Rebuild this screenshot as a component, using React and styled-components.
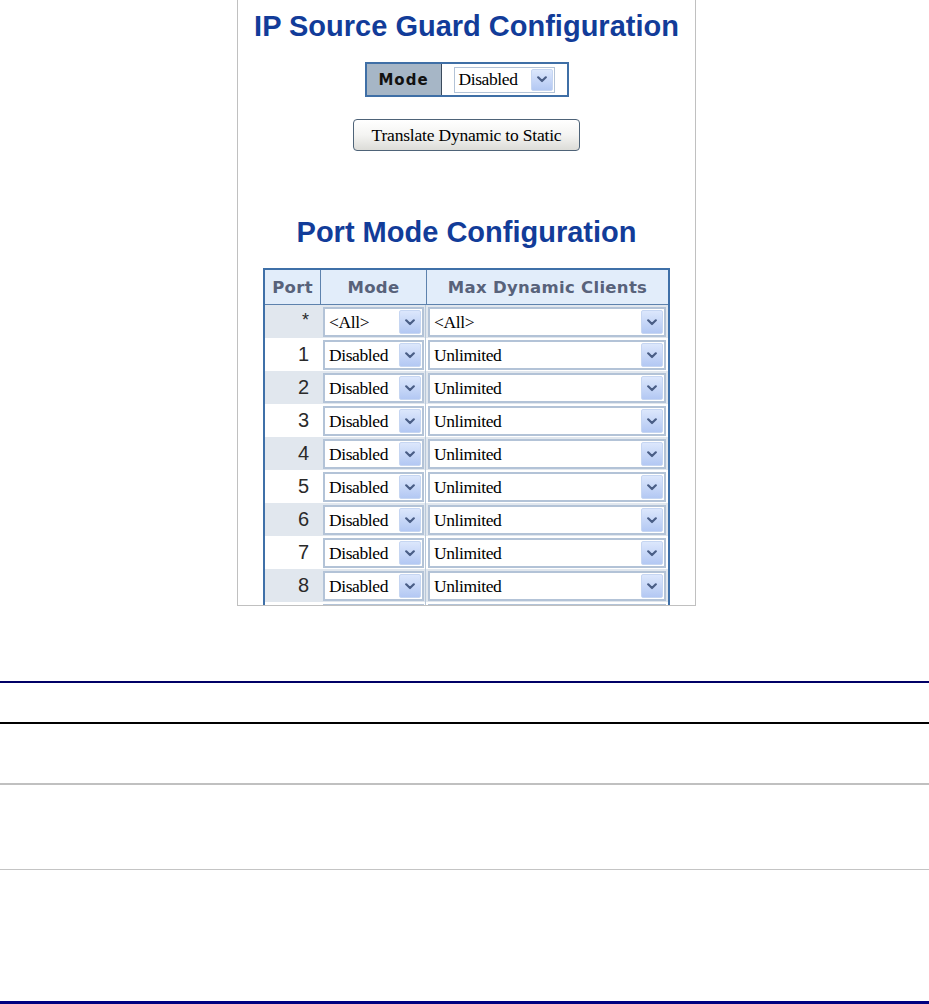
import React from "react"
import styled, { createGlobalStyle } from "styled-components"

const GlobalStyle = createGlobalStyle`
  html, body {
    margin: 0;
    padding: 0;
    background: #fff;
  }
  body {
    font-family: "Liberation Sans", Arial, sans-serif;
  }
`

const Page = styled.div`
  width: 929px;
  height: 1004px;
  overflow: hidden;
  display: flex;
  flex-direction: column;
`

const Shot = styled.div`
  flex-shrink: 0;
  margin-left: 237px;
  width: 459px;
  height: 606px;
  box-sizing: border-box;
  border: 1px solid #c0c0c0;
  border-top: none;
  overflow: hidden;
  display: flex;
  flex-direction: column;
  align-items: center;
  padding-top: 12px;

  & > * {
    flex-shrink: 0;
  }
`

const Title = styled.h1`
  margin: ${(p) => p.$top}px 0 0;
  font-family: "Liberation Sans", Arial, sans-serif;
  font-size: 29px;
  line-height: 29px;
  font-weight: bold;
  color: #123c99;
  white-space: nowrap;
`

const ModeBox = styled.div`
  margin-top: 21px;
  width: 204px;
  height: 35px;
  box-sizing: border-box;
  border: 2px solid #3f6fa6;
  display: flex;
`

const ModeLabel = styled.div`
  width: 74px;
  border-right: 1px solid #3a4a5c;
  background: #a6b6c6;
  display: flex;
  align-items: center;
  justify-content: center;
  font-family: "DejaVu Sans", Verdana, sans-serif;
  font-weight: bold;
  font-size: 15px;
  letter-spacing: 1px;
  color: #111;
`

const ModeValue = styled.div`
  flex: 1;
  background: #fff;
  display: flex;
  align-items: center;
  padding: 0 12px;
`

const Button = styled.div`
  margin-top: 22px;
  width: 227px;
  height: 32px;
  box-sizing: border-box;
  border: 1px solid #4e6378;
  border-radius: 4px;
  background: linear-gradient(#ffffff, #f4f4f2 50%, #dcdcd8);
  display: flex;
  align-items: center;
  justify-content: center;
  font-family: "Liberation Serif", "Times New Roman", serif;
  font-size: 17.5px;
  letter-spacing: -0.2px;
  color: #000;
  white-space: nowrap;
`

const Table = styled.div`
  margin-top: 21px;
  width: 407px;
  box-sizing: border-box;
  border: 2px solid #3f70a8;
  border-bottom: none;
`

const HeadRow = styled.div`
  display: grid;
  grid-template-columns: 56px 106px 1fr;
  height: 35px;
  box-sizing: border-box;
  border-bottom: 1px solid #5d82ad;
  background: #e2edfa;
`

const HeadCell = styled.div`
  display: flex;
  align-items: center;
  justify-content: center;
  border-right: ${(p) => (p.$last ? "none" : "1px solid #5d82ad")};
  font-family: "DejaVu Sans", Verdana, sans-serif;
  font-weight: bold;
  font-size: 16.5px;
  letter-spacing: 0.3px;
  color: #58627a;
  white-space: nowrap;
`

const Row = styled.div`
  display: grid;
  grid-template-columns: 56px 105px 1fr;
  height: 33px;
  background: ${(p) => (p.$alt ? "#e1e7ee" : "#fff")};
`

const PortCell = styled.div`
  display: flex;
  align-items: center;
  justify-content: flex-end;
  padding-right: 12px;
  font-family: "Liberation Sans", Arial, sans-serif;
  font-size: 20px;
  color: #2a2a2a;
`

const Star = styled.span`
  align-self: flex-start;
  margin-top: 5px;
  font-size: 18px;
`

const SelectCell = styled.div`
  display: flex;
  padding: 2px ${(p) => p.$r}px 1px ${(p) => p.$l}px;
  border-right: ${(p) => (p.$divider ? "1px solid #b8c8da" : "none")};
`

const SelectBox = styled.div`
  flex: 1;
  display: flex;
  align-items: stretch;
  box-sizing: border-box;
  height: ${(p) => p.$h}px;
  border: ${(p) => p.$b}px solid #b3c3d7;
  background: #fff;
  font-family: "Liberation Serif", "Times New Roman", serif;
  font-size: 17.5px;
  letter-spacing: -0.4px;
  color: #000;
`

const SelectText = styled.span`
  flex: 1;
  display: flex;
  align-items: center;
  padding-left: 4px;
  white-space: nowrap;
  overflow: hidden;
`

const Arrow = styled.span`
  width: 22px;
  margin: 1px;
  box-sizing: border-box;
  border-radius: 2px;
  border: 1px solid #c6d6f2;
  background: linear-gradient(#dce7fc, #b3c8f3);
  display: flex;
  align-items: center;
  justify-content: center;
`

const Rule = styled.div`
  flex-shrink: 0;
  margin-top: ${(p) => p.$top}px;
  height: ${(p) => p.$h}px;
  background: ${(p) => p.$c};
`

const Chevron = () => (
  <svg width="10" height="7" viewBox="0 0 10 7">
    <path d="M1.2 1.3 L5 5 L8.8 1.3" fill="none" stroke="#4a5e86" strokeWidth="2.2" strokeLinecap="round" strokeLinejoin="round" />
  </svg>
)

const Select = ({ value, h = 30, b = 2 }) => (
  <SelectBox $h={h} $b={b}>
    <SelectText>{value}</SelectText>
    <Arrow>
      <Chevron />
    </Arrow>
  </SelectBox>
)

// the ninth row is only peeking in at the bottom of the frame, so it has no text
const rows = [
  { port: "*", mode: "<All>", max: "<All>" },
  ...Array.from({ length: 8 }, (_, i) => ({
    port: String(i + 1),
    mode: "Disabled",
    max: "Unlimited",
  })),
  { port: "", mode: "", max: "" },
]

export default function App() {
  return (
    <Page>
      <GlobalStyle />
      <Shot>
        <Title $top={0}>IP Source Guard Configuration</Title>
        <ModeBox>
          <ModeLabel>Mode</ModeLabel>
          <ModeValue>
            <Select value="Disabled" h={26} b={1} />
          </ModeValue>
        </ModeBox>
        <Button>Translate Dynamic to Static</Button>
        <Title $top={67}>Port Mode Configuration</Title>
        <Table>
          <HeadRow>
            <HeadCell>Port</HeadCell>
            <HeadCell>Mode</HeadCell>
            <HeadCell $last>Max Dynamic Clients</HeadCell>
          </HeadRow>
          {rows.map((r, i) => (
            <Row key={i} $alt={i % 2 === 0}>
              <PortCell>{r.port === "*" ? <Star>*</Star> : r.port}</PortCell>
              <SelectCell $l={2} $r={1} $divider>
                <Select value={r.mode} />
              </SelectCell>
              <SelectCell $l={2} $r={2}>
                <Select value={r.max} />
              </SelectCell>
            </Row>
          ))}
        </Table>
      </Shot>
      <Rule $top={75} $h={2} $c="#000066" />
      <Rule $top={39} $h={2} $c="#000000" />
      <Rule $top={59} $h={2} $c="#c0c0c0" />
      <Rule $top={84} $h={1} $c="#c4c4c4" />
      <Rule $top={131} $h={3} $c="#000080" />
    </Page>
  )
}
